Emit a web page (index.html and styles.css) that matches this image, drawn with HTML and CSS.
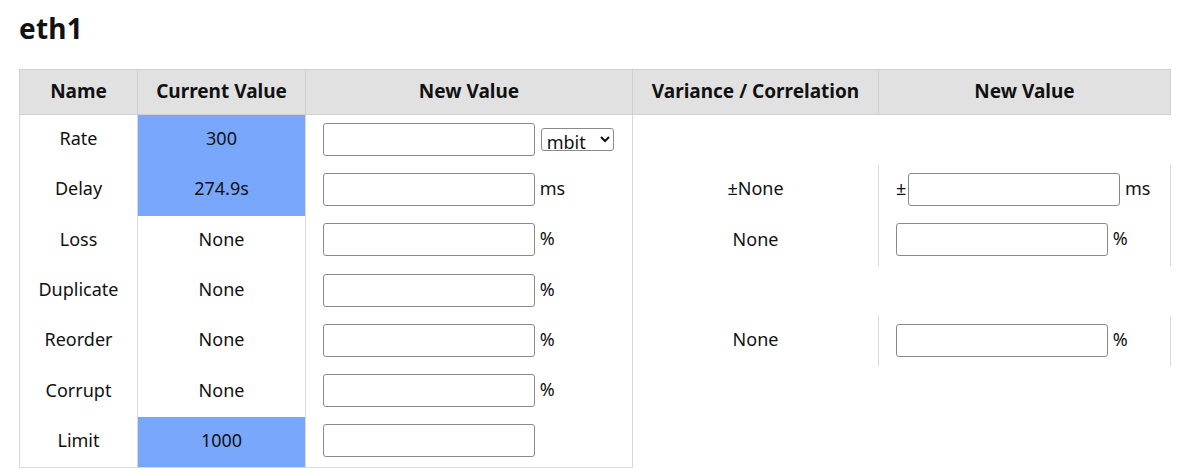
FILE: index.html
```html
<!DOCTYPE html>
<html>
<head>
<meta charset="utf-8">
<link rel="stylesheet" href="styles.css">
</head>
<body>
<div class="page">
  <h1 class="title">eth1</h1>
  <table class="qdisc">
    <colgroup>
      <col class="c-name"><col class="c-cur"><col class="c-new"><col class="c-var"><col class="c-new2">
    </colgroup>
    <thead>
      <tr>
        <th>Name</th><th>Current Value</th><th>New Value</th><th>Variance / Correlation</th><th>New Value</th>
      </tr>
    </thead>
    <tbody>
      <tr>
        <td class="center">Rate</td>
        <td class="center hl">300</td>
        <td class="edit"><input class="field" type="text"> <select class="unit"><option>mbit</option></select></td>
      </tr>
      <tr>
        <td class="center">Delay</td>
        <td class="center hl">274.9s</td>
        <td class="edit"><input class="field" type="text"> <span class="suffix">ms</span></td>
        <td class="center">±None</td>
        <td class="edit"><span class="pm">±</span><input class="field" type="text"> <span class="suffix">ms</span></td>
      </tr>
      <tr>
        <td class="center">Loss</td>
        <td class="center">None</td>
        <td class="edit"><input class="field" type="text"> <span class="suffix">%</span></td>
        <td class="center">None</td>
        <td class="edit"><input class="field" type="text"> <span class="suffix">%</span></td>
      </tr>
      <tr>
        <td class="center">Duplicate</td>
        <td class="center">None</td>
        <td class="edit"><input class="field" type="text"> <span class="suffix">%</span></td>
      </tr>
      <tr>
        <td class="center">Reorder</td>
        <td class="center">None</td>
        <td class="edit"><input class="field" type="text"> <span class="suffix">%</span></td>
        <td class="center">None</td>
        <td class="edit"><input class="field" type="text"> <span class="suffix">%</span></td>
      </tr>
      <tr>
        <td class="center">Corrupt</td>
        <td class="center">None</td>
        <td class="edit"><input class="field" type="text"> <span class="suffix">%</span></td>
      </tr>
      <tr class="last">
        <td class="center">Limit</td>
        <td class="center hl">1000</td>
        <td class="edit"><input class="field" type="text"></td>
      </tr>
    </tbody>
  </table>
</div>
</body>
</html>
```

FILE: styles.css
```css
html, body {
  margin: 0;
  padding: 0;
  background: #ffffff;
}

body {
  font-family: "Noto Sans", "Liberation Sans", sans-serif;
  color: #111111;
}

.page {
  padding: 0 19px;
}

.title {
  margin: 0;
  padding-top: 8px;
  height: 61px;
  font-size: 28px;
  font-weight: 700;
  line-height: 40px;
  letter-spacing: 0.2px;
}

.qdisc {
  border-collapse: collapse;
  table-layout: fixed;
  width: 1151px;
}

.c-name { width: 118px; }
.c-cur { width: 168px; }
.c-new { width: 327px; }
.c-var { width: 246px; }
.c-new2 { width: 292px; }

.qdisc th {
  background: #e1e1e1;
  border: 1px solid #d0d0d0;
  height: 42px;
  padding: 0 4px 2px;
  font-size: 19px;
  font-weight: 700;
  text-align: center;
  color: #111111;
}

.qdisc td {
  border-left: 1px solid #d8d8d8;
  border-right: 1px solid #d8d8d8;
  height: 48.3px;
  padding: 0 8px 2px 17px;
  font-size: 18px;
  vertical-align: middle;
  white-space: nowrap;
}

.qdisc td.center {
  text-align: center;
  height: 46.3px;
  padding: 0 4px 4px;
}

.qdisc tr.last td {
  border-bottom: 1px solid #d8d8d8;
}

.qdisc td.hl {
  background: #78a7fc;
}

.field {
  box-sizing: border-box;
  width: 212px;
  height: 33px;
  margin: 0;
  border: 1px solid #8a8a8a;
  border-radius: 3px;
  padding: 2px 6px;
  font-size: 17px;
  font-family: inherit;
  vertical-align: middle;
  background: #ffffff;
}

.unit {
  box-sizing: border-box;
  width: 73px;
  height: 23px;
  margin: 0 0 0 1px;
  border: 1px solid #8a8a8a;
  border-radius: 3px;
  font-size: 18px;
  font-family: inherit;
  color: #111111;
  background: #ffffff;
  vertical-align: middle;
  padding: 0 1px;
}

.suffix {
  margin-left: 0;
  vertical-align: middle;
  line-height: 1;
  padding-bottom: 3px;
  display: inline-block;
}

.pm {
  vertical-align: middle;
  margin-right: 2px;
  line-height: 1;
  padding-bottom: 3px;
  display: inline-block;
}
```
